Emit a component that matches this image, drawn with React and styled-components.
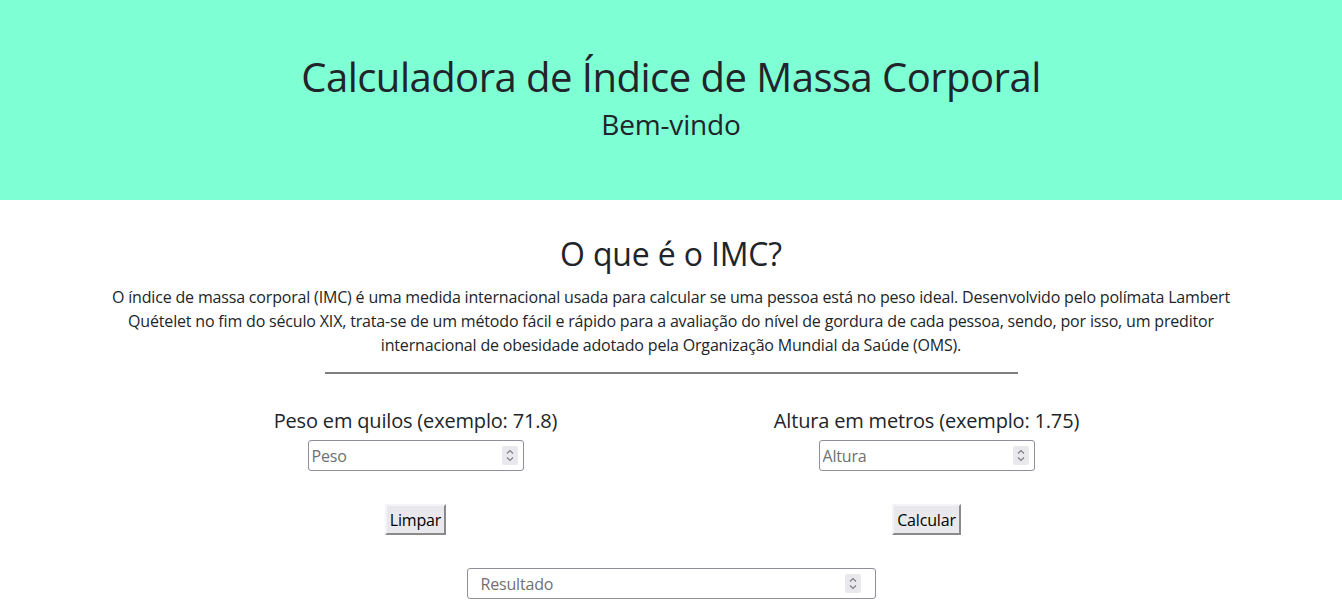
import React from "react";
import styled, { createGlobalStyle } from "styled-components";

const GlobalStyle = createGlobalStyle`
  html, body {
    margin: 0;
    padding: 0;
    background: #ffffff;
  }
  body {
    font-family: "Open Sans", "Noto Sans", sans-serif;
    letter-spacing: -0.011em;
    color: #212529;
  }
  * {
    box-sizing: border-box;
  }
`;

const Header = styled.header`
  height: 200px;
  background: #7fffd4;
  display: flex;
  flex-direction: column;
  align-items: center;
  padding-top: 53px;
`;

const Title = styled.h1`
  margin: 0 0 6px;
  font-size: 40px;
  line-height: 48px;
  font-weight: 400;
  letter-spacing: -0.013em;
`;

const Subtitle = styled.h3`
  margin: 0;
  font-size: 28px;
  line-height: 34px;
  font-weight: 400;
`;

const Main = styled.main`
  display: flex;
  flex-direction: column;
  align-items: center;
  padding-top: 35px;
`;

const SectionTitle = styled.h2`
  margin: 0 0 12px;
  font-size: 32px;
  line-height: 38px;
  font-weight: 400;
`;

const Text = styled.p`
  margin: 0;
  max-width: 1140px;
  font-size: 16px;
  line-height: 24px;
  text-align: center;
`;

const Divider = styled.hr`
  width: 693px;
  height: 2px;
  margin: 15px 0 0;
  border: 0;
  background: #7f7f7f;
`;

const Columns = styled.div`
  display: grid;
  grid-template-columns: 511px 511px;
  margin-top: 35px;
`;

const Column = styled.div`
  display: flex;
  flex-direction: column;
  align-items: center;
`;

const Label = styled.label`
  font-size: 20px;
  line-height: 24px;
  margin-bottom: 7px;
`;

const Field = styled.div`
  position: relative;
  width: ${(p) => p.$width}px;
  margin-top: ${(p) => p.$top || 0}px;
`;

const Input = styled.input`
  display: block;
  width: 100%;
  height: 31px;
  margin: 0;
  padding: 0 ${(p) => p.$padR}px 0 ${(p) => p.$padL}px;
  border: 1px solid #8f8f9d;
  border-radius: 3px;
  background: #fff;
  font-family: inherit;
  letter-spacing: inherit;
  font-size: 16px;
  color: #212529;
  outline: none;
  appearance: textfield;
  &::placeholder {
    color: #707070;
  }
  &::-webkit-inner-spin-button,
  &::-webkit-outer-spin-button {
    -webkit-appearance: none;
    margin: 0;
  }
`;

const Spin = styled.span`
  position: absolute;
  top: 6px;
  right: ${(p) => p.$right}px;
  width: 16px;
  height: 19px;
  background: #e9e9ed;
  border-radius: 2px;
  display: flex;
  align-items: center;
  justify-content: center;
  pointer-events: none;
`;

const Button = styled.button`
  height: 31px;
  margin-top: 33px;
  padding: 0 3px;
  font-family: inherit;
  letter-spacing: inherit;
  font-size: 16px;
  color: #000;
  background: #e9e9ed;
  border: 2px solid;
  border-color: #f4f4f6 #8a8a8a #8a8a8a #f4f4f6;
  border-radius: 0;
  cursor: pointer;
`;

const Spinner = ({ right }) => (
  <Spin $right={right}>
    <svg width="10" height="15" viewBox="0 0 10 15" fill="none">
      <path d="M2 5.5 L5 2.5 L8 5.5" stroke="#7a7a80" strokeWidth="1.1" />
      <path d="M2 9.5 L5 12.5 L8 9.5" stroke="#7a7a80" strokeWidth="1.1" />
    </svg>
  </Spin>
);

const NumberField = ({ placeholder, width, padL, padR, top }) => (
  <Field $width={width} $top={top}>
    <Input type="number" placeholder={placeholder} $padL={padL} $padR={padR} />
    <Spinner right={padR + 1} />
  </Field>
);

export default function App() {
  return (
    <>
      <GlobalStyle />
      <Header>
        <Title>Calculadora de Índice de Massa Corporal</Title>
        <Subtitle>Bem-vindo</Subtitle>
      </Header>
      <Main>
        <SectionTitle>O que é o IMC?</SectionTitle>
        <Text>
          O índice de massa corporal (IMC) é uma medida internacional usada para
          calcular se uma pessoa está no peso ideal. Desenvolvido pelo polímata
          Lambert Quételet no fim do século XIX, trata-se de um método fácil e
          rápido para a avaliação do nível de gordura de cada pessoa, sendo, por
          isso, um preditor internacional de obesidade adotado pela Organização
          Mundial da Saúde (OMS).
        </Text>
        <Divider />
        <Columns>
          <Column>
            <Label>Peso em quilos (exemplo: 71.8)</Label>
            <NumberField placeholder="Peso" width={216} padL={3} padR={5} />
            <Button>Limpar</Button>
          </Column>
          <Column>
            <Label>Altura em metros (exemplo: 1.75)</Label>
            <NumberField placeholder="Altura" width={216} padL={3} padR={5} />
            <Button>Calcular</Button>
          </Column>
        </Columns>
        <NumberField placeholder="Resultado" width={409} padL={13} padR={14} top={33} />
      </Main>
    </>
  );
}
